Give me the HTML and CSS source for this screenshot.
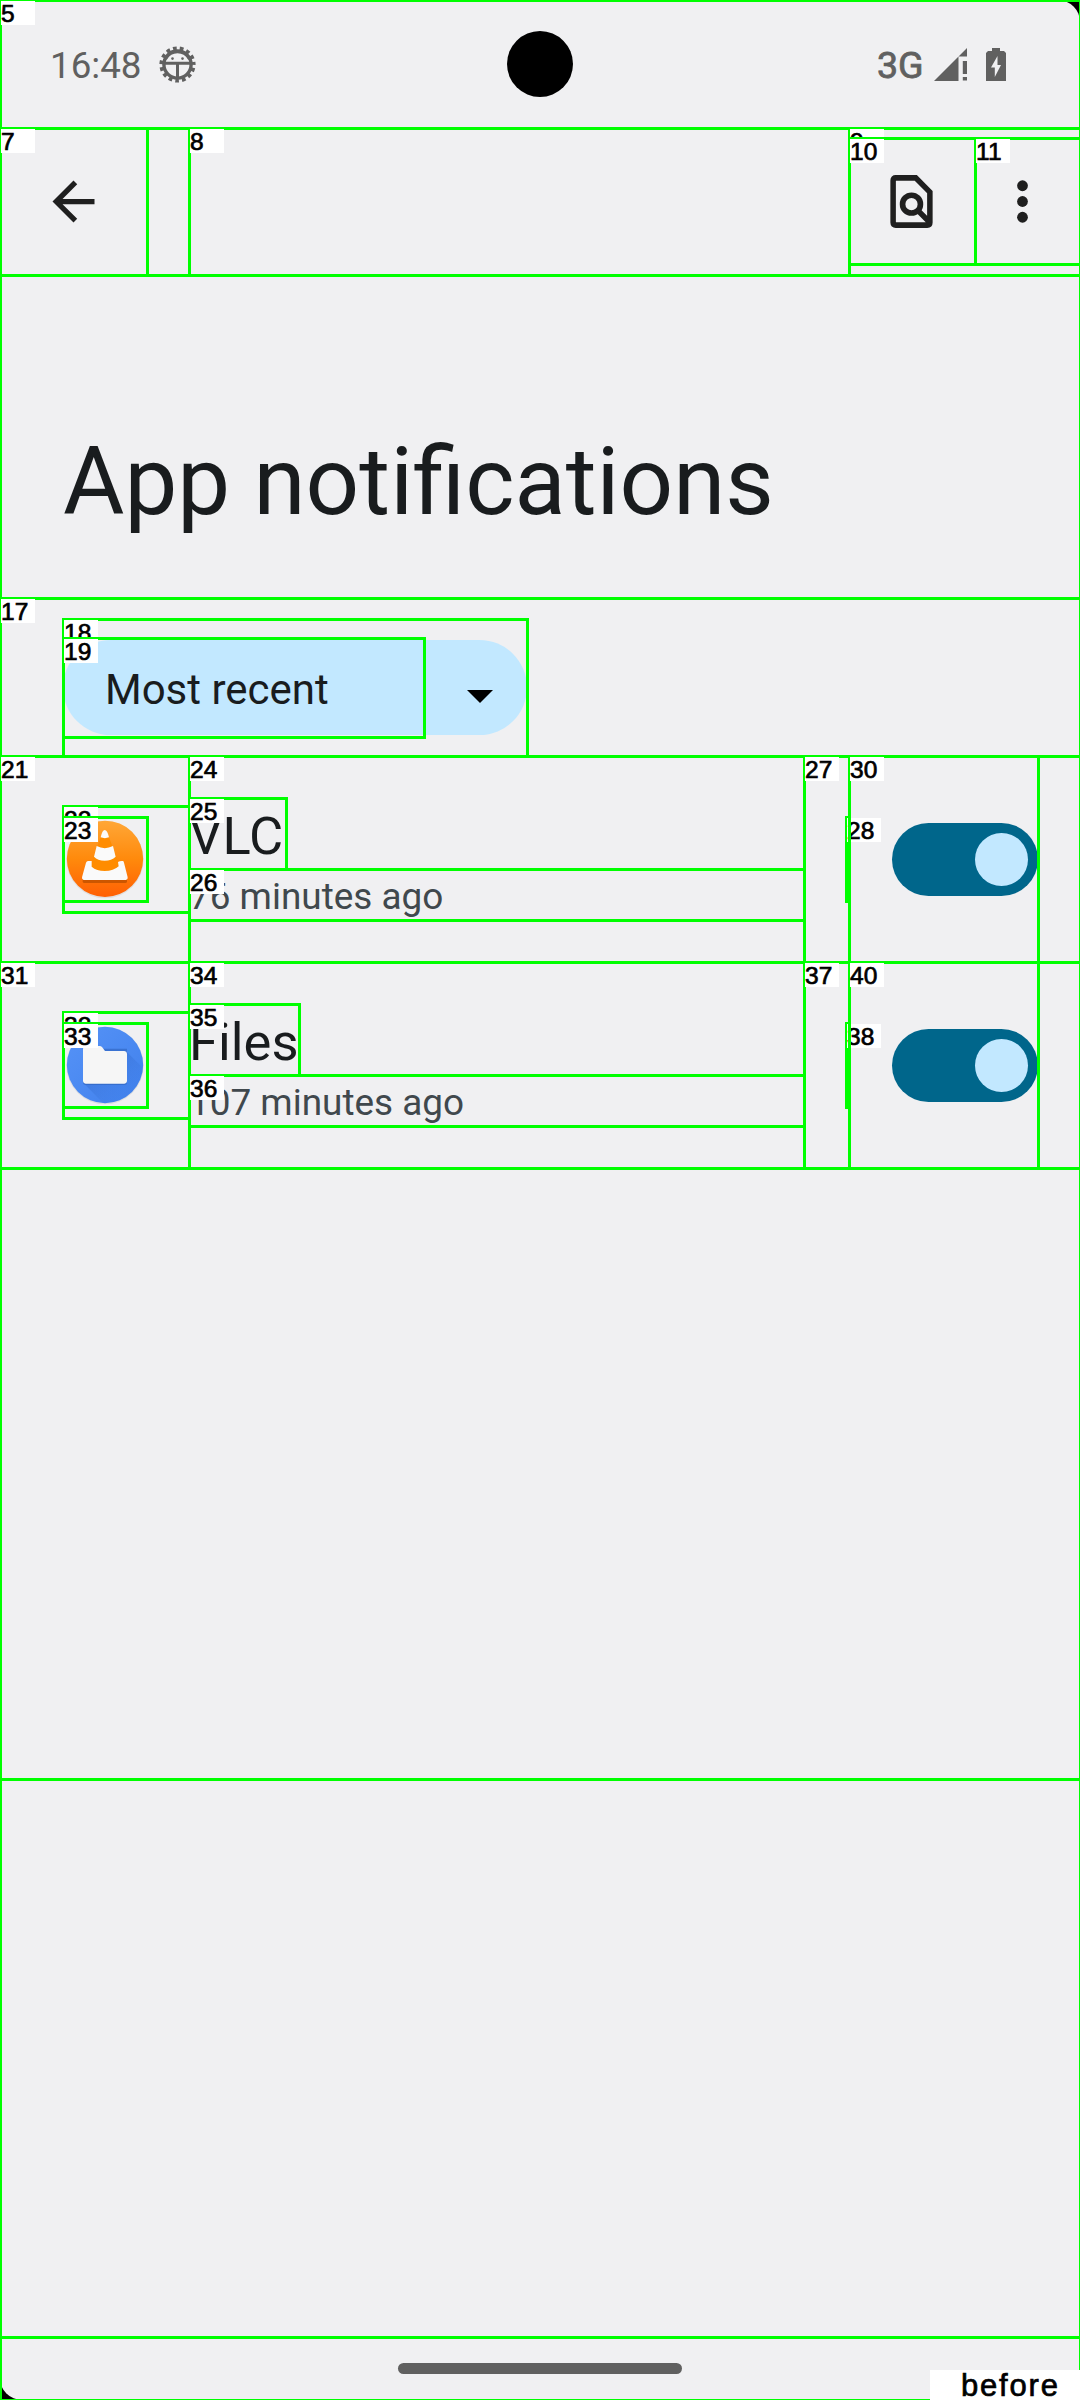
FILE: index.html
```
<!DOCTYPE html>
<html lang="en">
<head>
<meta charset="utf-8">
<title>App notifications</title>
<link rel="stylesheet" href="styles.css">
</head>
<body>
<div class="stage">
<main class="screen">
  <header class="status">
    <span class="clock">16:48</span>
    <svg class="debug" viewBox="-18.5 -18.5 37 37">
      <circle r="13.6" fill="none" stroke="#606060" stroke-width="3.4"/>
      <circle r="15.8" fill="none" stroke="#606060" stroke-width="4.6" stroke-dasharray="3.6 3.018" stroke-dashoffset="-3.4"/>
      <path d="M-13-1.3H13M0-1V14" stroke="#606060" stroke-width="3" fill="none"/>
      <path d="M-13-4Q-10-14 0-14.500Q10-14 13-4L10.500-5Q7-11.200 0-11.200Q-7-11.200-10.500-5Z" fill="#606060"/>
      <circle cx="-5" cy="-5.9" r="1.3" fill="#606060"/><circle cx="5" cy="-5.9" r="1.3" fill="#606060"/>
    </svg>
    <span class="camera"></span>
    <span class="net">3G</span>
    <svg class="signal" viewBox="0 0 33 33"><path d="M0 33L24.5 8.5V33ZM33 0V8.5H24.5ZM28.8 13H33V26H28.8ZM28.8 29H33V32.5H28.8Z" fill="#606060"/></svg>
    <svg class="battery" viewBox="0 0 20 33"><path d="M6 0H14V3H18L20 5V33H0V5L2 3H6ZM11.5 8L5 19.5H8.8V29L15 17H11.5Z" fill="#606060" fill-rule="evenodd"/></svg>
  </header>
  <nav class="toolbar">
    <span class="back"><svg class="icon" viewBox="0 0 24 24"><path d="M20 11H7.83l5.59-5.59L12 4l-8 8 8 8 1.41-1.41L7.83 13H20z" fill="#1f1f1f"/></svg></span>
    <span class="find"><svg class="icon" viewBox="0 0 24 24"><path d="M6 3H13.6L19 8.4V20Q19 21 18 21H6Q5 21 5 20V4Q5 3 6 3ZM14.3 15.3L19.2 20.2" fill="none" stroke="#1f1f1f" stroke-width="2.1"/><circle cx="12" cy="13" r="3.4" fill="none" stroke="#1f1f1f" stroke-width="2.15"/></svg></span>
    <span class="more"><svg class="icon" viewBox="0 0 24 24" fill="#1f1f1f"><circle cx="12" cy="6" r="2.05"/><circle cx="12" cy="12" r="2.05"/><circle cx="12" cy="18" r="2.05"/></svg></span>
  </nav>
  <h1 class="title">App notifications</h1>
  <section class="filter">
    <div class="pill"><span class="choice">Most recent</span><svg class="caret" viewBox="0 0 26 13"><path d="M0 0H26L13 13Z"/></svg></div>
  </section>
  <section class="row">
    <svg class="app" viewBox="189 201 252 252">
      <defs>
        <linearGradient id="orange" x1="0" y1="0" x2="0" y2="1"><stop offset="0" stop-color="#ffa737"/><stop offset=".5" stop-color="#ff8a0c"/><stop offset="1" stop-color="#ff5f04"/></linearGradient>
      </defs>
      <circle cx="315" cy="329" r="116" fill="#000" opacity=".07"/>
      <circle cx="315" cy="326.5" r="114.5" fill="url(#orange)"/>
      <path d="M302 262L270 350Q314 380 360 350L327 262Z" fill="#ff8c00"/>
      <path d="M248 386H381V396Q380 399 376 399H253Q249 399 248 396Z" fill="#cc5600"/>
      <path d="M302 262Q307 240 314 240Q322 240 327 262Q315 267 302 262ZM290 288Q314 301 339 288L347 320Q335 332 314 332Q293 332 282 320ZM264 333H275V350Q290 363 314 363Q341 363 356 349L354 336Q360 332 369 333Q371 334 372 338L383 382Q384 389 378 390H251Q245 389 246 382L258 338Q260 333 264 333Z" fill="#fafafa"/>
    </svg>
    <div class="text"><div class="name">VLC</div><div class="ago">76 minutes ago</div></div>
    <span class="switch"><i class="thumb"></i></span>
  </section>
  <section class="row">
    <svg class="app" viewBox="189 219 252 252">
      <defs>
        <linearGradient id="blue" x1="0" y1="0" x2="1" y2="1"><stop offset="0" stop-color="#5693f7"/><stop offset="1" stop-color="#4080ec"/></linearGradient>
        <linearGradient id="shade" x1="0" y1="0" x2="1" y2="1"><stop offset=".3" stop-color="#2458b8" stop-opacity=".25"/><stop offset=".75" stop-color="#3f7fea" stop-opacity="0"/></linearGradient>
        <clipPath id="disc"><circle cx="315" cy="345" r="114.5"/></clipPath>
      </defs>
      <circle cx="315" cy="347" r="116" fill="#000" opacity=".07"/>
      <circle cx="315" cy="345" r="114.5" fill="url(#blue)"/>
      <path d="M380 305L480 405V500H350L251 400Z" fill="url(#shade)" clip-path="url(#disc)"/>
      <path d="M249 296H381V398Q380 405 373 405H257Q250 405 249 398Z" fill="#2c5fb8" opacity=".55"/>
      <path d="M257 288H299Q303 288 306 291L315 303H373Q381 304 381 311V394Q380 401 373 401H257Q250 401 249 394V296Q249 289 257 288Z" fill="#f6f6f6"/>
    </svg>
    <div class="text"><div class="name">Files</div><div class="ago">107 minutes ago</div></div>
    <span class="switch"><i class="thumb"></i></span>
  </section>
  <footer class="home"><span class="handle"></span></footer>
</main>

<svg class="marks" viewBox="0 0 1080 2400">
  <g class="box"><rect x="0.5" y="0.5" width="1080" height="2400"/></g>
  <g class="box"><rect x="0.5" y="128.5" width="1080" height="1651"/></g>
  <g class="tag"><rect x="1" y="1" width="34" height="24"/><text x="1" y="22">5</text></g>
  <g class="box"><rect x="0.5" y="128.5" width="1080" height="470"/><rect x="0.5" y="128.5" width="1080" height="147"/><rect x="0.5" y="128.5" width="147" height="147"/></g>
  <g class="tag"><rect x="1" y="129" width="34" height="24"/><text x="1" y="150">7</text></g>
  <g class="box"><rect x="189.5" y="128.5" width="660" height="147"/></g>
  <g class="tag"><rect x="190" y="129" width="34" height="24"/><text x="190" y="150">8</text></g>
  <g class="box"><rect x="849.5" y="128.5" width="231" height="147"/></g>
  <g class="tag"><rect x="850" y="129" width="34" height="24"/><text x="850" y="150">9</text></g>
  <g class="box"><rect x="849.5" y="138.5" width="126" height="126"/></g>
  <g class="tag"><rect x="850" y="139" width="34" height="24"/><text x="850" y="160">10</text></g>
  <g class="box"><rect x="975.5" y="138.5" width="105" height="126"/></g>
  <g class="tag"><rect x="976" y="139" width="34" height="24"/><text x="976" y="160">11</text></g>
  <g class="box"><rect x="0.5" y="598.5" width="1080" height="158"/></g>
  <g class="tag"><rect x="1" y="599" width="34" height="24"/><text x="1" y="620">17</text></g>
  <g class="box"><rect x="63.5" y="619.5" width="464" height="137"/></g>
  <g class="tag"><rect x="64" y="620" width="34" height="24"/><text x="64" y="641">18</text></g>
  <g class="box"><rect x="63.5" y="638.5" width="361" height="99"/></g>
  <g class="tag"><rect x="64" y="639" width="34" height="24"/><text x="64" y="660">19</text></g>

  <g class="box"><rect x="0.5" y="756.5" width="1080" height="206"/></g>
  <g class="tag"><rect x="1" y="757" width="34" height="24"/><text x="1" y="778">21</text></g>
  <g class="box"><rect x="63.5" y="806.5" width="126" height="106"/></g>
  <g class="tag"><rect x="64" y="807" width="34" height="24"/><text x="64" y="828">22</text></g>
  <g class="box"><rect x="63.5" y="817.5" width="84" height="84"/></g>
  <g class="tag"><rect x="64" y="818" width="34" height="24"/><text x="64" y="839">23</text></g>
  <g class="box"><rect x="189.5" y="756.5" width="615" height="206"/></g>
  <g class="tag"><rect x="190" y="757" width="34" height="24"/><text x="190" y="778">24</text></g>
  <g class="box"><rect x="189.5" y="798.5" width="97" height="71"/></g>
  <g class="tag"><rect x="190" y="799" width="34" height="24"/><text x="190" y="820">25</text></g>
  <g class="box"><rect x="189.5" y="869.5" width="615" height="51"/></g>
  <g class="tag"><rect x="190" y="870" width="34" height="24"/><text x="190" y="891">26</text></g>
  <g class="box"><rect x="804.5" y="756.5" width="234" height="206"/></g>
  <g class="tag"><rect x="805" y="757" width="34" height="24"/><text x="805" y="778">27</text></g>
  <g class="box"><rect x="846.5" y="817.5" width="3" height="84"/></g>
  <g class="tag"><rect x="847" y="818" width="34" height="24"/><text x="847" y="839">28</text></g>
  <g class="box"><rect x="849.5" y="756.5" width="189" height="206"/></g>
  <g class="tag"><rect x="850" y="757" width="34" height="24"/><text x="850" y="778">30</text></g>

  <g class="box"><rect x="0.5" y="962.5" width="1080" height="206"/></g>
  <g class="tag"><rect x="1" y="963" width="34" height="24"/><text x="1" y="984">31</text></g>
  <g class="box"><rect x="63.5" y="1012.5" width="126" height="106"/></g>
  <g class="tag"><rect x="64" y="1013" width="34" height="24"/><text x="64" y="1034">32</text></g>
  <g class="box"><rect x="63.5" y="1023.5" width="84" height="84"/></g>
  <g class="tag"><rect x="64" y="1024" width="34" height="24"/><text x="64" y="1045">33</text></g>
  <g class="box"><rect x="189.5" y="962.5" width="615" height="206"/></g>
  <g class="tag"><rect x="190" y="963" width="34" height="24"/><text x="190" y="984">34</text></g>
  <g class="box"><rect x="189.5" y="1004.5" width="110" height="71"/></g>
  <g class="tag"><rect x="190" y="1005" width="34" height="24"/><text x="190" y="1026">35</text></g>
  <g class="box"><rect x="189.5" y="1075.5" width="615" height="51"/></g>
  <g class="tag"><rect x="190" y="1076" width="34" height="24"/><text x="190" y="1097">36</text></g>
  <g class="box"><rect x="804.5" y="962.5" width="234" height="206"/></g>
  <g class="tag"><rect x="805" y="963" width="34" height="24"/><text x="805" y="984">37</text></g>
  <g class="box"><rect x="846.5" y="1023.5" width="3" height="84"/></g>
  <g class="tag"><rect x="847" y="1024" width="34" height="24"/><text x="847" y="1045">38</text></g>
  <g class="box"><rect x="849.5" y="962.5" width="189" height="206"/></g>
  <g class="tag"><rect x="850" y="963" width="34" height="24"/><text x="850" y="984">40</text></g>

  <g class="box"><path d="M0 2337.5H1080"/></g>
  <g class="tag"><rect x="930" y="2370" width="150" height="30"/><text class="stamp" x="961" y="2396" textLength="97">before</text></g>
</svg>
</div>
</body>
</html>
```
FILE: styles.css
```
* { box-sizing: border-box; }
body { margin: 0; background: #000; font-family: Roboto, "Liberation Sans", sans-serif; }
.stage { position: relative; width: 1080px; height: 2400px; background: #000; overflow: hidden; }
.screen { display: flex; flex-direction: column; width: 1080px; height: 2400px; background: #f0f0f2; border-radius: 22px; overflow: hidden; color: #191c1e; }
.screen svg { display: block; flex: none; }

.status { display: flex; align-items: center; height: 128px; padding-left: 50px; color: #606060; font-size: 36.75px; }
.clock { width: 109px; line-height: 44px; padding-top: 4px; }
.debug { width: 37px; height: 37px; margin-top: 1px; }
.camera { width: 66px; height: 66px; margin-left: 311px; border-radius: 50%; background: #000; }
.net { width: 57px; margin-left: 304px; font-size: 37.5px; line-height: 44px; padding-top: 1px; -webkit-text-stroke: .8px #606060; }
.signal { width: 33px; height: 33px; }
.battery { width: 20px; height: 33px; margin-left: 19px; }

.toolbar { display: flex; align-items: center; height: 147px; }
.icon { width: 63px; height: 63px; }
.back { display: flex; justify-content: center; width: 147px; }
.find { display: flex; justify-content: center; width: 126px; margin-left: 701px; }
.more { padding-left: 17px; }

.title { height: 323px; margin: 0; padding: 152px 0 0 63px; font-size: 94.2px; font-weight: 400; line-height: 110px; white-space: nowrap; }

.filter { height: 158px; padding: 42px 0 0 63px; }
.pill { display: flex; align-items: center; justify-content: space-between; width: 464px; height: 95px; padding: 0 34px 0 42px; border-radius: 48px; background: #c2e8ff; font-size: 42px; line-height: 50px; }
.choice { padding-top: 4px; }
.caret { width: 26px; height: 13px; margin-top: 18px; }

.row { display: flex; align-items: flex-start; height: 206px; padding: 42px 42px 0 63px; }
.app { width: 84px; height: 84px; margin-top: 19px; }
.text { flex: 1; margin-left: 42px; }
.name { padding: 7px 0 2px; font-size: 52.5px; line-height: 62px; }
.ago { padding: 6px 0 2px; color: #40484d; font-size: 36.9px; line-height: 43px; }
.switch { display: flex; justify-content: flex-end; width: 146px; height: 73px; margin-top: 25px; padding: 10px; border-radius: 37px; background: #00668b; }
.thumb { width: 53px; height: 53px; border-radius: 50%; background: #c2e8ff; }

.home { display: flex; justify-content: center; margin-top: auto; height: 63px; padding-top: 26px; }
.handle { width: 284px; height: 11px; border-radius: 5.5px; background: #606060; }

.marks { position: absolute; left: 0; top: 0; width: 1080px; height: 2400px; }
.box { fill: none; stroke: #00ff00; stroke-width: 3; }
.tag rect { fill: #fff; }
.tag text { fill: #000; stroke: #000; stroke-width: .7; font: 24.5px "Liberation Sans", sans-serif; letter-spacing: .2px; }
.tag .stamp { font-size: 31px; letter-spacing: 0; }
```
